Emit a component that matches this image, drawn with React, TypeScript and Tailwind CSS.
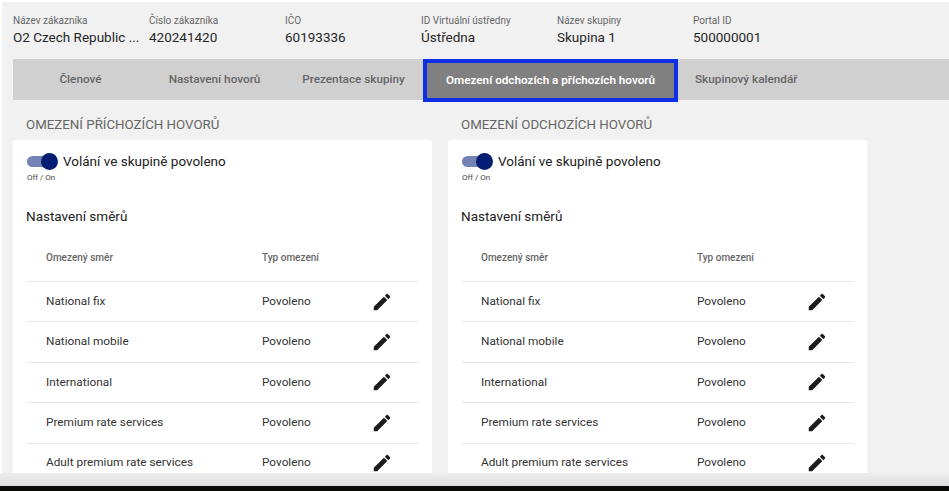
const info = [
  { label: "Název zákazníka", value: "O2 Czech Republic ..." },
  { label: "Číslo zákazníka", value: "420241420" },
  { label: "IČO", value: "60193336" },
  { label: "ID Virtuální ústředny", value: "Ústředna" },
  { label: "Název skupiny", value: "Skupina 1" },
  { label: "Portal ID", value: "500000001" },
];

const rows = [
  "National fix",
  "National mobile",
  "International",
  "Premium rate services",
  "Adult premium rate services",
];

function EditIcon() {
  return (
    <svg width="22" height="22" viewBox="0 0 24 24" fill="#1c1c1c">
      <path d="M3 17.25V21h3.75L17.81 9.94l-3.75-3.75L3 17.25zM20.71 7.04c.39-.39.39-1.02 0-1.41l-2.34-2.34c-.39-.39-1.02-.39-1.41 0l-1.83 1.83 3.75 3.75 1.83-1.83z" />
    </svg>
  );
}

function Panel({ title }: { title: string }) {
  return (
    <div className="w-[419px] shrink-0">
      <h2 className="h-[40px] pl-[13px] pt-[16px] text-[13.3px] leading-[17px] text-[#666666] uppercase">{title}</h2>
      <div className="bg-white rounded-[3px] h-[400px] px-[13px] pt-[12px]">
        <div className="flex items-center h-[18px]">
          <div className="relative w-[30px] h-[11px] ml-[1px] rounded-full bg-[#7482b4]">
            <div className="absolute -right-px -top-[3px] w-[17px] h-[17px] rounded-full bg-[#031e72]" />
          </div>
          <span className="ml-[6px] text-[13.5px] leading-[18px] text-[#212121]">Volání ve skupině povoleno</span>
        </div>
        <div className="mt-[2px] ml-[1px] text-[8px] leading-[12px] text-[#444444]">Off / On</div>
        <div className="mt-[24px] text-[13.5px] leading-[17px] text-[#212121]">Nastavení směrů</div>
        <div className="mt-[8px] ml-[1px] w-[392px]">
          <div className="flex items-center h-[48px] pl-[19px] text-[10px] text-[#666666] font-medium">
            <div className="w-[216px]">Omezený směr</div>
            <div>Typ omezení</div>
          </div>
          {rows.map((row) => (
            <div key={row} className="flex items-center h-[40.4px] pl-[19px] border-t border-[#e8e8e8] text-[11.8px] text-[#333333]">
              <div className="w-[216px] whitespace-nowrap">{row}</div>
              <div className="w-[109px]">Povoleno</div>
              <EditIcon />
            </div>
          ))}
        </div>
      </div>
    </div>
  );
}

export default function App() {
  return (
    <div className="relative w-[949px] h-[491px] overflow-hidden bg-white pt-[2px] pl-[2px] font-['Roboto',sans-serif]">
      <div className="h-[489px] bg-[#f1f1f1] pl-[11px] overflow-hidden">
        <div className="flex h-[57px] pt-[12px]">
          {info.map((item) => (
            <div key={item.label} className="w-[136px] shrink-0">
              <div className="text-[10px] leading-[13px] text-[#666666]">{item.label}</div>
              <div className="text-[13.5px] leading-[20px] text-[#262626]">{item.value}</div>
            </div>
          ))}
        </div>
        <div className="flex h-[41px] bg-[#d0d0d0] text-[11.75px] font-medium text-[#666666]">
          <div className="w-[135px] flex items-center justify-center">Členové</div>
          <div className="w-[133px] flex items-center justify-center">Nastavení hovorů</div>
          <div className="w-[142px] flex items-center justify-center pl-[3px]">Prezentace skupiny</div>
          <div className="w-[255px] h-[43px] shrink-0 border-[4px] border-[#0d2fe8] bg-[#808080] flex items-center justify-center text-[11.7px] text-white font-semibold">
            Omezení odchozích a příchozích hovorů
          </div>
          <div className="pl-[17px] flex items-center">Skupinový kalendář</div>
        </div>
        <div className="flex gap-[16px]">
          <Panel title="Omezení příchozích hovorů" />
          <Panel title="Omezení odchozích hovorů" />
        </div>
      </div>
      <div className="absolute left-0 right-0 bottom-[5px] h-[13px] bg-gradient-to-b from-[#eeeeee] to-[#dcdcdc]" />
      <div className="absolute left-0 right-0 bottom-0 h-[5px] bg-[#0a0a08]" />
    </div>
  );
}
